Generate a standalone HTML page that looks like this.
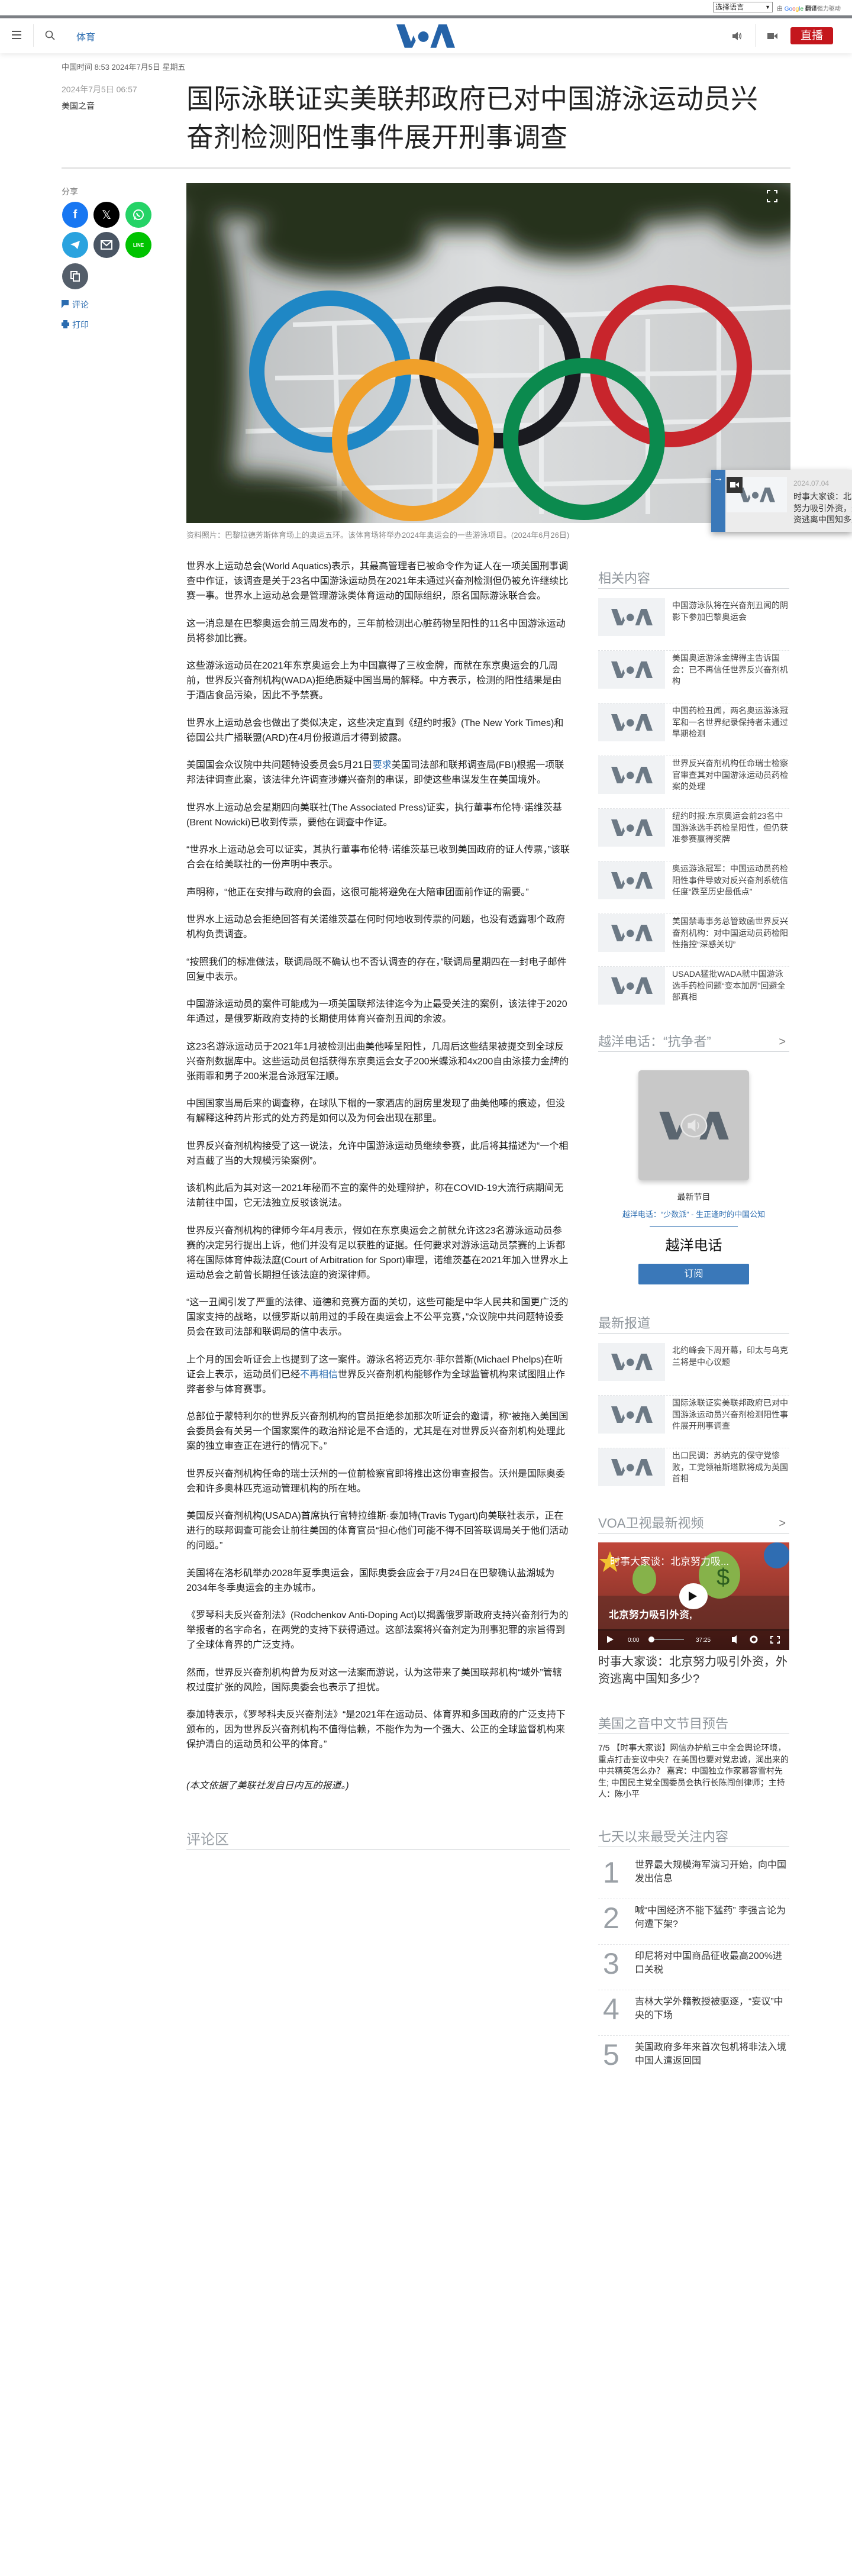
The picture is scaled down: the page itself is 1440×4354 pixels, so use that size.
<!DOCTYPE html>
<html><head><meta charset="utf-8">
<style>
*{margin:0;padding:0;box-sizing:border-box}
body{width:1440px;height:4354px;position:relative;background:#fff;font-family:"Liberation Sans","Noto Sans CJK SC",sans-serif;color:#222;overflow:hidden}
.abs{position:absolute}
a{color:#2b6cb0;text-decoration:none}
.body p{font-size:16px;line-height:25px;margin-bottom:21.5px;color:#222}
.sh{position:absolute;left:1011px;width:323px;font-size:22px;color:#8f969c;border-bottom:1px solid #cfd3d6;height:30px;line-height:26px}
.sh .chev{position:absolute;right:6px;top:0;font-size:20px;color:#777}
.item{position:absolute;left:1011px;width:323px;height:89px;border-bottom:1px dashed #e3e5e7}
.thumb{position:absolute;left:0;top:0;width:113px;height:64px;background:#f0f2f4;display:flex;align-items:center;justify-content:center}
.item .t{position:absolute;left:125px;top:3px;width:198px;font-size:14px;line-height:19.5px;color:#444}
.top7{position:absolute;left:1011px;width:323px;height:77px;border-bottom:1px dashed #e3e5e7}
.top7 .n{position:absolute;left:8px;top:4px;font-size:50px;color:#9aa0a6;line-height:56px}
.top7 .t{position:absolute;left:62px;top:8px;width:260px;font-size:16px;line-height:23px;color:#333}
.circ{position:absolute;width:44px;height:44px;border-radius:50%;display:flex;align-items:center;justify-content:center;color:#fff;font-weight:bold}
</style></head><body>
<svg width="0" height="0" style="position:absolute">
<defs>
<symbol id="voa" viewBox="0 0 100 40">
<polygon points="0,0 14,0 25,30 29,19 33,28 27,40 14,40"/>
<circle cx="46" cy="21" r="9"/>
<polygon points="58,40 72,0 86,0 100,40 86,40 77,14 68,40"/>
</symbol>
</defs></svg>

<div class="abs" style="left:1205px;top:3px;width:101px;height:18px;border:1px solid #888;font-size:12px;line-height:16px;padding-left:3px;background:#fff">选择语言<span style="position:absolute;right:3px;font-size:9px">▼</span></div>
<div class="abs" style="left:1313px;top:6px;font-size:10px;color:#666">由 <span style="color:#4285f4">Go</span><span style="color:#ea4335">o</span><span style="color:#fbbc05">g</span><span style="color:#4285f4">l</span><span style="color:#34a853">e</span> <b style="color:#333">翻译</b>强力驱动</div>
<div class="abs" style="left:0;top:26px;width:1440px;height:5px;background:#7d8186"></div>

<div class="abs" style="left:0;top:31px;width:1440px;height:59px;background:#fff;box-shadow:0 3px 8px rgba(0,0,0,.08)"></div>
<div class="abs" style="left:20px;top:52px;width:16px;height:2px;background:#555"></div>
<div class="abs" style="left:20px;top:58px;width:16px;height:2px;background:#555"></div>
<div class="abs" style="left:20px;top:64px;width:16px;height:2px;background:#555"></div>
<div class="abs" style="left:56px;top:41px;width:1px;height:38px;background:#e6e6e6"></div>
<svg class="abs" style="left:76px;top:51px" width="18" height="18" viewBox="0 0 18 18"><circle cx="7" cy="7" r="5.5" fill="none" stroke="#555" stroke-width="1.6"/><line x1="11" y1="11" x2="16" y2="16" stroke="#555" stroke-width="1.8"/></svg>
<div class="abs" style="left:129px;top:49px;font-size:16px;color:#2b6cb0">体育</div>
<svg class="abs" style="left:670px;top:41px;fill:#2563a8" width="99" height="40"><use href="#voa"/></svg>
<svg class="abs" style="left:1236px;top:52px" width="20" height="18" viewBox="0 0 20 18"><polygon points="2,6 6,6 11,2 11,16 6,12 2,12" fill="#666"/><path d="M13 6 Q15 9 13 12 M15 4 Q18 9 15 14" stroke="#666" fill="none" stroke-width="1.4"/></svg>
<div class="abs" style="left:1276px;top:41px;width:1px;height:38px;background:#e6e6e6"></div>
<svg class="abs" style="left:1296px;top:53px" width="20" height="16" viewBox="0 0 20 16"><rect x="1" y="3" width="11" height="10" fill="#666"/><polygon points="12,8 18,3 18,13" fill="#666"/></svg>
<div class="abs" style="left:1336px;top:46px;width:72px;height:29px;background:#c4161c;border-radius:3px;color:#fff;font-size:19px;text-align:center;line-height:29px">直播</div>

<div class="abs" style="left:104px;top:103px;font-size:13px;color:#666">中国时间 8:53 2024年7月5日 星期五</div>
<div class="abs" style="left:104px;top:141px;font-size:14px;color:#999">2024年7月5日 06:57</div>
<div class="abs" style="left:104px;top:169px;font-size:14px;color:#333">美国之音</div>
<h1 class="abs" style="left:315px;top:135px;width:1100px;font-size:46px;line-height:65px;font-weight:normal;color:#222;white-space:nowrap">国际泳联证实美联邦政府已对中国游泳运动员兴<br>奋剂检测阳性事件展开刑事调查</h1>
<div class="abs" style="left:104px;top:283px;width:1232px;height:2px;background:#dcdcdc"></div>

<div class="abs" style="left:104px;top:314px;font-size:14px;color:#777">分享</div>
<div class="circ" style="left:105px;top:341px;background:#1877f2;font-size:20px;font-family:'Liberation Sans'">f</div>
<div class="circ" style="left:158px;top:341px;background:#000;font-size:20px;font-weight:normal">𝕏</div>
<div class="circ" style="left:212px;top:341px;background:#25d366"><svg width="22" height="22" viewBox="0 0 22 22"><circle cx="11" cy="11" r="8" fill="none" stroke="#fff" stroke-width="2"/><path d="M4 19 L6 14" stroke="#fff" stroke-width="2"/><path d="M8 8 Q9 13 14 14" stroke="#fff" stroke-width="2" fill="none"/></svg></div>
<div class="circ" style="left:105px;top:392px;background:#2aa3df"><svg width="20" height="20" viewBox="0 0 20 20"><polygon points="2,9 18,3 14,17 9,12" fill="#fff"/></svg></div>
<div class="circ" style="left:158px;top:392px;background:#4a5563"><svg width="20" height="16" viewBox="0 0 20 16"><rect x="1" y="1" width="18" height="14" fill="none" stroke="#fff" stroke-width="2"/><path d="M1 1 L10 9 L19 1" stroke="#fff" stroke-width="2" fill="none"/></svg></div>
<div class="circ" style="left:212px;top:392px;background:#00c300;font-size:8px">LINE</div>
<div class="circ" style="left:105px;top:445px;background:#545e6a"><svg width="16" height="18" viewBox="0 0 16 18"><rect x="1" y="1" width="10" height="12" fill="none" stroke="#fff" stroke-width="2"/><rect x="5" y="5" width="10" height="12" fill="#545e6a" stroke="#fff" stroke-width="2"/></svg></div>
<svg class="abs" style="left:104px;top:507px" width="12" height="14" viewBox="0 0 12 14"><rect x="0" y="0" width="12" height="9" fill="#2b6cb0"/><polygon points="0,9 4,9 0,14" fill="#2b6cb0"/></svg>
<div class="abs" style="left:122px;top:505px;font-size:14px;color:#2b6cb0">评论</div>
<svg class="abs" style="left:104px;top:541px" width="13" height="14" viewBox="0 0 13 14"><rect x="3" y="0" width="7" height="4" fill="#2b6cb0"/><rect x="0" y="4" width="13" height="6" fill="#2b6cb0"/><rect x="3" y="9" width="7" height="5" fill="#2b6cb0"/></svg>
<div class="abs" style="left:122px;top:539px;font-size:14px;color:#2b6cb0">打印</div>

<svg class="abs" style="left:315px;top:309px" width="1021" height="575" viewBox="0 0 1021 575">
<defs>
<filter id="bl" x="-20%" y="-20%" width="140%" height="140%"><feGaussianBlur stdDeviation="18"/></filter>
<linearGradient id="bg" x1="0" y1="0" x2="1" y2="0"><stop offset="0" stop-color="#b9bcbd"/><stop offset=".5" stop-color="#dcdedf"/><stop offset="1" stop-color="#c9cbcc"/></linearGradient>
</defs>
<rect width="1021" height="575" fill="url(#bg)"/>
<g stroke="#eceeef" stroke-width="8" fill="none" opacity=".9">
<line x1="180" y1="240" x2="1021" y2="210"/><line x1="150" y1="330" x2="1021" y2="320"/><line x1="100" y1="420" x2="1021" y2="400"/><line x1="100" y1="520" x2="1021" y2="500"/>
<line x1="250" y1="240" x2="260" y2="560"/><line x1="420" y1="240" x2="420" y2="560"/><line x1="600" y1="240" x2="600" y2="560"/><line x1="780" y1="230" x2="780" y2="560"/><line x1="900" y1="230" x2="900" y2="560"/>
</g>
<g filter="url(#bl)" fill="#26301f">
<ellipse cx="480" cy="10" rx="560" ry="70"/>
<ellipse cx="260" cy="100" rx="150" ry="60"/>
<ellipse cx="650" cy="80" rx="120" ry="50"/>
<ellipse cx="20" cy="320" rx="70" ry="300"/>
<ellipse cx="90" cy="560" rx="200" ry="70"/>
<ellipse cx="980" cy="40" rx="90" ry="60"/>
</g>
<g fill="none" stroke-width="26">
<circle cx="243" cy="319" r="124" stroke="#1f87c5"/>
<circle cx="530" cy="312" r="124" stroke="#1a1b20"/>
<circle cx="819" cy="310" r="124" stroke="#c8252c"/>
<circle cx="383" cy="435" r="124" stroke="#f0a02a"/>
<circle cx="672" cy="433" r="124" stroke="#0b8a4e"/>
</g>
<path d="M987 13 h-5 v5 M993 13 h5 v5 M987 32 h-5 v-5 M993 32 h5 v-5" stroke="#fff" stroke-width="2" fill="none"/>
</svg>
<div class="abs" style="left:315px;top:894px;font-size:13px;color:#888">资料照片：巴黎拉德芳斯体育场上的奥运五环。该体育场将举办2024年奥运会的一些游泳项目。(2024年6月26日)</div>

<div class="abs" style="left:1202px;top:794px;width:238px;height:105px;background:#ececec;box-shadow:0 4px 10px rgba(0,0,0,.35);overflow:hidden">
<div class="abs" style="left:0;top:0;width:24px;height:105px;background:#3a78b9;color:#fff;font-size:16px;text-align:center;line-height:30px">→</div>
<div class="abs" style="left:26px;top:12px;width:102px;height:60px;background:#f3f5f7;display:flex;align-items:center;justify-content:center"><svg width="62" height="25" style="fill:#6c7985"><use href="#voa"/></svg></div>
<div class="abs" style="left:26px;top:12px;width:27px;height:27px;background:#333"><svg width="27" height="27" viewBox="0 0 27 27"><rect x="6" y="9" width="9" height="9" fill="#fff"/><polygon points="15,13 21,9 21,18" fill="#fff"/></svg></div>
<div class="abs" style="left:139px;top:16px;font-size:12px;color:#aaa">2024.07.04</div>
<div class="abs" style="left:139px;top:36px;width:120px;font-size:14px;line-height:19.5px;color:#333">时事大家谈：北京努力吸引外资，外资逃离中国知多少?</div>
</div>

<div class="abs body" style="left:315px;top:945px;width:650px">
<p>世界水上运动总会(World Aquatics)表示，其最高管理者已被命令作为证人在一项美国刑事调查中作证，该调查是关于23名中国游泳运动员在2021年未通过兴奋剂检测但仍被允许继续比赛一事。世界水上运动总会是管理游泳类体育运动的国际组织，原名国际游泳联合会。</p>
<p>这一消息是在巴黎奥运会前三周发布的，三年前检测出心脏药物呈阳性的11名中国游泳运动员将参加比赛。</p>
<p>这些游泳运动员在2021年东京奥运会上为中国赢得了三枚金牌，而就在东京奥运会的几周前，世界反兴奋剂机构(WADA)拒绝质疑中国当局的解释。中方表示，检测的阳性结果是由于酒店食品污染，因此不予禁赛。</p>
<p>世界水上运动总会也做出了类似决定，这些决定直到《纽约时报》(The New York Times)和德国公共广播联盟(ARD)在4月份报道后才得到披露。</p>
<p>美国国会众议院中共问题特设委员会5月21日<a>要求</a>美国司法部和联邦调查局(FBI)根据一项联邦法律调查此案，该法律允许调查涉嫌兴奋剂的串谋，即使这些串谋发生在美国境外。</p>
<p>世界水上运动总会星期四向美联社(The Associated Press)证实，执行董事布伦特·诺维茨基(Brent Nowicki)已收到传票，要他在调查中作证。</p>
<p>“世界水上运动总会可以证实，其执行董事布伦特·诺维茨基已收到美国政府的证人传票，”该联合会在给美联社的一份声明中表示。</p>
<p>声明称，“他正在安排与政府的会面，这很可能将避免在大陪审团面前作证的需要。”</p>
<p>世界水上运动总会拒绝回答有关诺维茨基在何时何地收到传票的问题，也没有透露哪个政府机构负责调查。</p>
<p>“按照我们的标准做法，联调局既不确认也不否认调查的存在，”联调局星期四在一封电子邮件回复中表示。</p>
<p>中国游泳运动员的案件可能成为一项美国联邦法律迄今为止最受关注的案例，该法律于2020年通过，是俄罗斯政府支持的长期使用体育兴奋剂丑闻的余波。</p>
<p>这23名游泳运动员于2021年1月被检测出曲美他嗪呈阳性，几周后这些结果被提交到全球反兴奋剂数据库中。这些运动员包括获得东京奥运会女子200米蝶泳和4x200自由泳接力金牌的张雨霏和男子200米混合泳冠军汪顺。</p>
<p>中国国家当局后来的调查称，在球队下榻的一家酒店的厨房里发现了曲美他嗪的痕迹，但没有解释这种药片形式的处方药是如何以及为何会出现在那里。</p>
<p>世界反兴奋剂机构接受了这一说法，允许中国游泳运动员继续参赛，此后将其描述为“一个相对直截了当的大规模污染案例”。</p>
<p>该机构此后为其对这一2021年秘而不宣的案件的处理辩护，称在COVID-19大流行病期间无法前往中国，它无法独立反驳该说法。</p>
<p>世界反兴奋剂机构的律师今年4月表示，假如在东京奥运会之前就允许这23名游泳运动员参赛的决定另行提出上诉，他们并没有足以获胜的证据。任何要求对游泳运动员禁赛的上诉都将在国际体育仲裁法庭(Court of Arbitration for Sport)审理，诺维茨基在2021年加入世界水上运动总会之前曾长期担任该法庭的资深律师。</p>
<p>“这一丑闻引发了严重的法律、道德和竞赛方面的关切，这些可能是中华人民共和国更广泛的国家支持的战略，以俄罗斯以前用过的手段在奥运会上不公平竞赛，”众议院中共问题特设委员会在致司法部和联调局的信中表示。</p>
<p>上个月的国会听证会上也提到了这一案件。游泳名将迈克尔·菲尔普斯(Michael Phelps)在听证会上表示，运动员们已经<a>不再相信</a>世界反兴奋剂机构能够作为全球监管机构来试图阻止作弊者参与体育赛事。</p>
<p>总部位于蒙特利尔的世界反兴奋剂机构的官员拒绝参加那次听证会的邀请，称“被拖入美国国会委员会有关另一个国家案件的政治辩论是不合适的，尤其是在对世界反兴奋剂机构处理此案的独立审查正在进行的情况下。”</p>
<p>世界反兴奋剂机构任命的瑞士沃州的一位前检察官即将推出这份审查报告。沃州是国际奥委会和许多奥林匹克运动管理机构的所在地。</p>
<p>美国反兴奋剂机构(USADA)首席执行官特拉维斯·泰加特(Travis Tygart)向美联社表示，正在进行的联邦调查可能会让前往美国的体育官员“担心他们可能不得不回答联调局关于他们活动的问题。”</p>
<p>美国将在洛杉矶举办2028年夏季奥运会，国际奥委会应会于7月24日在巴黎确认盐湖城为2034年冬季奥运会的主办城市。</p>
<p>《罗琴科夫反兴奋剂法》(Rodchenkov Anti-Doping Act)以揭露俄罗斯政府支持兴奋剂行为的举报者的名字命名，在两党的支持下获得通过。这部法案将兴奋剂定为刑事犯罪的宗旨得到了全球体育界的广泛支持。</p>
<p>然而，世界反兴奋剂机构曾为反对这一法案而游说，认为这带来了美国联邦机构“域外”管辖权过度扩张的风险，国际奥委会也表示了担忧。</p>
<p>泰加特表示，《罗琴科夫反兴奋剂法》“是2021年在运动员、体育界和多国政府的广泛支持下颁布的，因为世界反兴奋剂机构不值得信赖，不能作为为一个强大、公正的全球监督机构来保护清白的运动员和公平的体育。”</p>
</div>
<div class="abs" style="left:315px;top:3004px;font-size:16px;font-style:italic;color:#222">(本文依据了美联社发自日内瓦的报道。)</div>
<div class="abs" style="left:315px;top:3089px;width:648px;height:38px;border-bottom:1px solid #cfd3d6;font-size:24px;color:#9aa0a6">评论区</div>

<div class="sh" style="top:965px">相关内容</div>
<div class="item" style="top:1011px"><div class="thumb"><svg width="70" height="28" style="fill:#6c7985"><use href="#voa"/></svg></div><div class="t">中国游泳队将在兴奋剂丑闻的阴影下参加巴黎奥运会</div></div>
<div class="item" style="top:1100px"><div class="thumb"><svg width="70" height="28" style="fill:#6c7985"><use href="#voa"/></svg></div><div class="t">美国奥运游泳金牌得主告诉国会：已不再信任世界反兴奋剂机构</div></div>
<div class="item" style="top:1189px"><div class="thumb"><svg width="70" height="28" style="fill:#6c7985"><use href="#voa"/></svg></div><div class="t">中国药检丑闻，两名奥运游泳冠军和一名世界纪录保持者未通过早期检测</div></div>
<div class="item" style="top:1278px"><div class="thumb"><svg width="70" height="28" style="fill:#6c7985"><use href="#voa"/></svg></div><div class="t">世界反兴奋剂机构任命瑞士检察官审查其对中国游泳运动员药检案的处理</div></div>
<div class="item" style="top:1367px"><div class="thumb"><svg width="70" height="28" style="fill:#6c7985"><use href="#voa"/></svg></div><div class="t">纽约时报:东京奥运会前23名中国游泳选手药检呈阳性，但仍获准参赛赢得奖牌</div></div>
<div class="item" style="top:1456px"><div class="thumb"><svg width="70" height="28" style="fill:#6c7985"><use href="#voa"/></svg></div><div class="t">奥运游泳冠军：中国运动员药检阳性事件导致对反兴奋剂系统信任度“跌至历史最低点”</div></div>
<div class="item" style="top:1545px"><div class="thumb"><svg width="70" height="28" style="fill:#6c7985"><use href="#voa"/></svg></div><div class="t">美国禁毒事务总管致函世界反兴奋剂机构：对中国运动员药检阳性指控“深感关切”</div></div>
<div class="item" style="top:1634px;border-bottom:none"><div class="thumb"><svg width="70" height="28" style="fill:#6c7985"><use href="#voa"/></svg></div><div class="t">USADA猛批WADA就中国游泳选手药检问题“变本加厉”回避全部真相</div></div>

<div class="sh" style="top:1748px">越洋电话：“抗争者”<span class="chev">&gt;</span></div>
<div class="abs" style="left:1079px;top:1809px;width:187px;height:186px;background:#c8c8c8;border-radius:5px;box-shadow:0 4px 8px rgba(0,0,0,.2);display:flex;align-items:center;justify-content:center">
<svg width="118" height="47" viewBox="0 0 100 40"><use href="#voa" style="fill:#5b6670"/><ellipse cx="50" cy="20" rx="18" ry="16" fill="#c8c8c8" stroke="#e8e8e8" stroke-width="2"/><polygon points="41,16 46,16 52,11 52,29 46,24 41,24" fill="#e8e8e8"/><path d="M55 15 Q58 20 55 25" stroke="#e8e8e8" fill="none" stroke-width="1.5"/></svg></div>
<div class="abs" style="left:1011px;top:2013px;width:323px;text-align:center;font-size:14px;color:#333">最新节目</div>
<div class="abs" style="left:1011px;top:2042px;width:323px;text-align:center;font-size:13px;color:#2b6cb0">越洋电话：“少数派” - 生正逢时的中国公知</div>
<div class="abs" style="left:1098px;top:2073px;width:149px;height:1px;background:#2b6cb0"></div>
<div class="abs" style="left:1011px;top:2085px;width:323px;text-align:center;font-size:24px;color:#111">越洋电话</div>
<div class="abs" style="left:1079px;top:2136px;width:187px;height:35px;background:#3a78b9;border-radius:2px;color:#fff;font-size:16px;text-align:center;line-height:35px">订阅</div>

<div class="sh" style="top:2224px">最新报道</div>
<div class="item" style="top:2270px"><div class="thumb"><svg width="70" height="28" style="fill:#6c7985"><use href="#voa"/></svg></div><div class="t">北约峰会下周开幕，印太与乌克兰将是中心议题</div></div>
<div class="item" style="top:2359px"><div class="thumb"><svg width="70" height="28" style="fill:#6c7985"><use href="#voa"/></svg></div><div class="t">国际泳联证实美联邦政府已对中国游泳运动员兴奋剂检测阳性事件展开刑事调查</div></div>
<div class="item" style="top:2448px;border-bottom:none"><div class="thumb"><svg width="70" height="28" style="fill:#6c7985"><use href="#voa"/></svg></div><div class="t">出口民调：苏纳克的保守党惨败，工党领袖斯塔默将成为英国首相</div></div>

<div class="sh" style="top:2562px">VOA卫视最新视频<span class="chev">&gt;</span></div>
<svg class="abs" style="left:1011px;top:2607px" width="323" height="182" viewBox="0 0 323 182">
<defs><linearGradient id="vg" x1="0" y1="0" x2="0" y2="1"><stop offset="0" stop-color="#c0473a"/><stop offset="1" stop-color="#6e2a22"/></linearGradient></defs>
<rect width="323" height="182" fill="url(#vg)"/>
<polygon points="20,15 25,28 38,28 28,36 32,50 20,41 8,50 12,36 2,28 15,28" fill="#f2c230"/>
<rect x="0" y="90" width="323" height="60" fill="#5a2c25" opacity=".6"/>
<ellipse cx="205" cy="55" rx="35" ry="40" fill="#86b24a"/><ellipse cx="78" cy="62" rx="20" ry="25" fill="#86b24a"/>
<text x="200" y="72" font-size="40" fill="#2c5e1f" font-family="Liberation Sans">$</text>
<circle cx="302" cy="22" r="22" fill="#2f6db2"/>
<text x="20" y="38" font-size="17" fill="#fff" font-family="Liberation Sans,Noto Sans CJK SC">时事大家谈：北京努力吸...</text>
<text x="18" y="128" font-size="17" fill="#fff" font-weight="bold" font-family="Liberation Sans,Noto Sans CJK SC">北京努力吸引外资,</text>
<ellipse cx="161" cy="91" rx="24" ry="22" fill="#fff"/><polygon points="153,83 153,99 167,91" fill="#111"/>
<rect x="0" y="146" width="323" height="36" fill="#000" opacity=".45"/>
<polygon points="15,158 15,170 26,164" fill="#fff"/>
<text x="50" y="168" font-size="10" fill="#fff" font-family="Liberation Sans">0:00</text>
<rect x="85" y="163" width="60" height="2" fill="#888"/><circle cx="90" cy="164" r="5" fill="#fff"/>
<text x="165" y="168" font-size="10" fill="#fff" font-family="Liberation Sans">37:25</text>
<polygon points="226,160 230,160 234,157 234,171 230,168 226,168" fill="#fff"/>
<circle cx="263" cy="164" r="5" fill="none" stroke="#fff" stroke-width="3"/>
<path d="M296 159 h-4 v4 M302 159 h4 v4 M296 170 h-4 v-4 M302 170 h4 v-4" stroke="#fff" stroke-width="2" fill="none"/>
</svg>
<div class="abs" style="left:1011px;top:2795px;width:323px;font-size:20px;line-height:29px;color:#333">时事大家谈：北京努力吸引外资，外资逃离中国知多少?</div>

<div class="sh" style="top:2901px">美国之音中文节目预告</div>
<div class="abs" style="left:1011px;top:2945px;width:323px;font-size:14px;line-height:19.5px;color:#333">7/5 【时事大家谈】网信办护航三中全会舆论环境，重点打击妄议中央？在美国也要对党忠诚，润出来的中共精英怎么办？ 嘉宾：中国独立作家慕容雪村先生; 中国民主党全国委员会执行长陈闯创律师；主持人：陈小平</div>

<div class="sh" style="top:3092px">七天以来最受关注内容</div>
<div class="top7" style="top:3133px"><div class="n">1</div><div class="t">世界最大规模海军演习开始，向中国发出信息</div></div>
<div class="top7" style="top:3210px"><div class="n">2</div><div class="t">喊“中国经济不能下猛药” 李强言论为何遭下架?</div></div>
<div class="top7" style="top:3287px"><div class="n">3</div><div class="t">印尼将对中国商品征收最高200%进口关税</div></div>
<div class="top7" style="top:3364px"><div class="n">4</div><div class="t">吉林大学外籍教授被驱逐，“妄议”中央的下场</div></div>
<div class="top7" style="top:3441px;border-bottom:none"><div class="n">5</div><div class="t">美国政府多年来首次包机将非法入境中国人遣返回国</div></div>
</body></html>
